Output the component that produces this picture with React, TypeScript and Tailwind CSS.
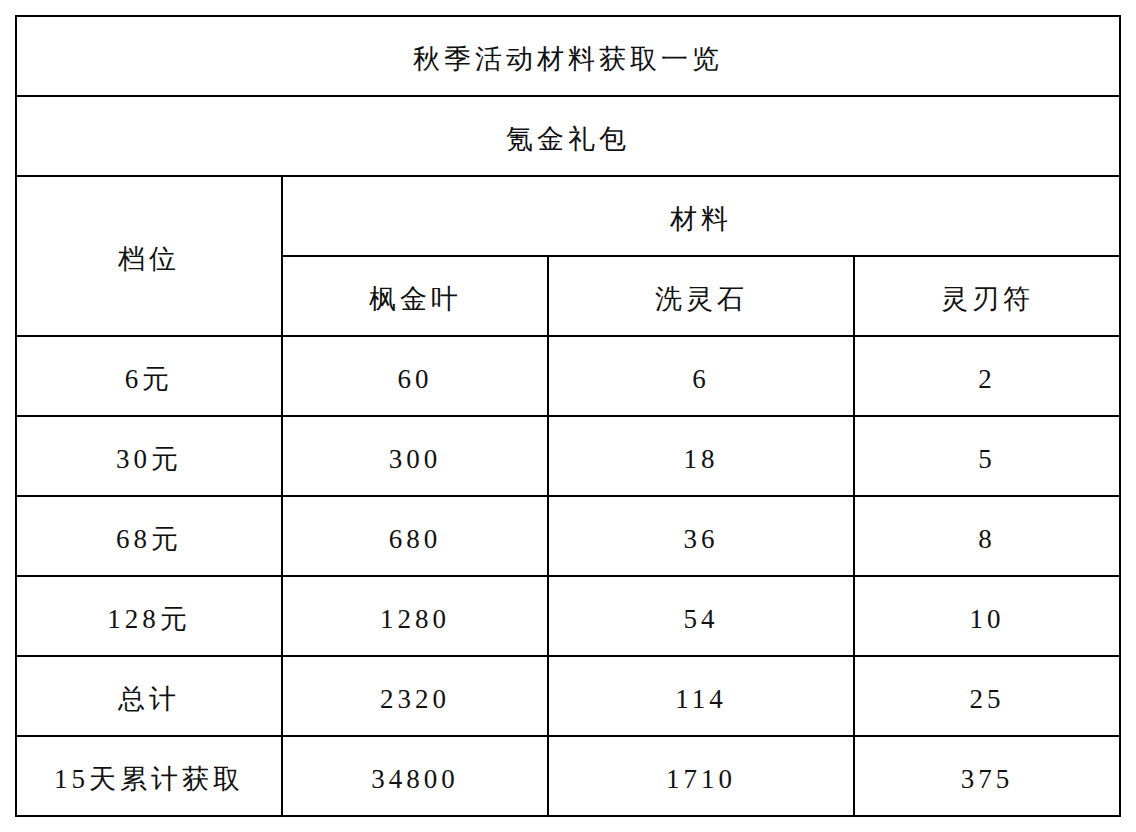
import React from 'react'

const rows = [
    ['6元', '60', '6', '2'],
    ['30元', '300', '18', '5'],
    ['68元', '680', '36', '8'],
    ['128元', '1280', '54', '10'],
    ['总计', '2320', '114', '25'],
    ['15天累计获取', '34800', '1710', '375'],
]

const serifFamily = '"Liberation Serif"'

function Cell({ children, colSpan, rowSpan }: { children: React.ReactNode; colSpan?: number; rowSpan?: number }) {
    return (
        <td
            colSpan={colSpan}
            rowSpan={rowSpan}
            className="border-2 border-black h-[80px] text-center align-middle p-0 pt-[6px]"
            style={{ fontFamily: serifFamily }}
        >
            <span className="text-[#111] text-[27px] font-medium tracking-[4px]">{children}</span>
        </td>
    )
}

export default function App() {
    return (
        <div className="w-[1136px] h-[832px] bg-white pt-[15px] pl-[15px]">
            <table className="table-fixed border-collapse">
                <colgroup>
                    <col className="w-[266px]" />
                    <col className="w-[266px]" />
                    <col className="w-[306px]" />
                    <col className="w-[266px]" />
                </colgroup>
                <tbody>
                    <tr>
                        <Cell colSpan={4}>秋季活动材料获取一览</Cell>
                    </tr>
                    <tr>
                        <Cell colSpan={4}>氪金礼包</Cell>
                    </tr>
                    <tr>
                        <Cell rowSpan={2}>档位</Cell>
                        <Cell colSpan={3}>材料</Cell>
                    </tr>
                    <tr>
                        <Cell>枫金叶</Cell>
                        <Cell>洗灵石</Cell>
                        <Cell>灵刃符</Cell>
                    </tr>
                    {rows.map((r, i) => (
                        <tr key={i}>
                            {r.map((v, j) => (
                                <Cell key={j}>{v}</Cell>
                            ))}
                        </tr>
                    ))}
                </tbody>
            </table>
        </div>
    )
}
